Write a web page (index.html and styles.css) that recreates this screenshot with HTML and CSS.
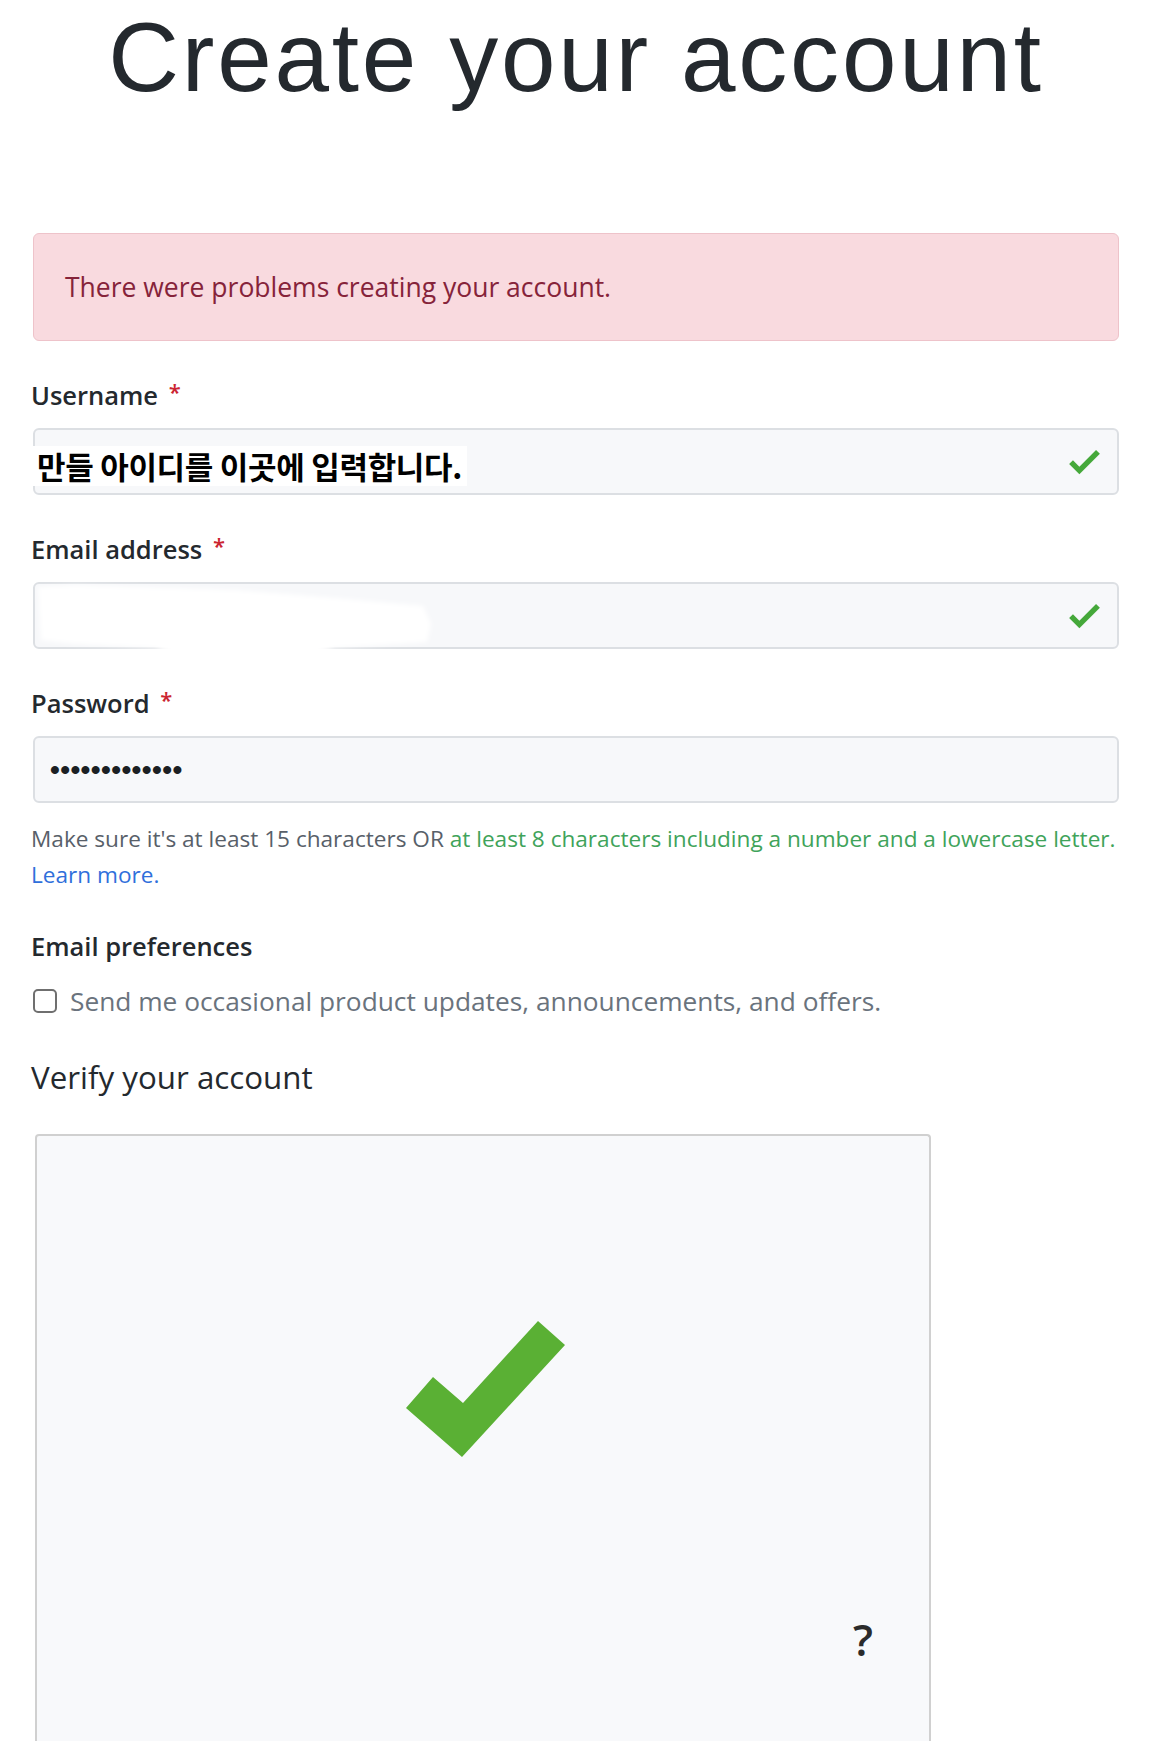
FILE: index.html
```html
<!DOCTYPE html>
<html lang="en">
<head>
<meta charset="utf-8">
<title>Create your account</title>
<link rel="stylesheet" href="styles.css">
</head>
<body>
<div class="page">
  <h1 class="title">Create your account</h1>

  <div class="flash">There were problems creating your account.</div>

  <div class="field">
    <div class="label">Username <span class="req">*</span></div>
    <div class="input">
      <span class="pasted">만들 아이디를 이곳에 입력합니다.</span>
      <svg class="ok" viewBox="0 0 12 16" width="31" height="41"><path d="M12 5l-8 8-4-4 1.5-1.5L4 10l6.5-6.5L12 5z"/></svg>
    </div>
  </div>

  <div class="field">
    <div class="label">Email address <span class="req">*</span></div>
    <div class="input input-email">
      <svg class="smear" width="420" height="80" viewBox="0 0 420 80">
        <defs><filter id="soft" x="-10%" y="-30%" width="120%" height="160%"><feGaussianBlur stdDeviation="2"/></filter></defs>
        <path d="M3 3 L40 1 L200 6 L300 14 L388 22 L396 40 L392 58 L300 64 L268 74 L150 74 L120 64 L40 60 L6 56 Z" fill="#ffffff" filter="url(#soft)"/>
      </svg>
      <svg class="ok" viewBox="0 0 12 16" width="31" height="41"><path d="M12 5l-8 8-4-4 1.5-1.5L4 10l6.5-6.5L12 5z"/></svg>
    </div>
  </div>

  <div class="field">
    <div class="label">Password <span class="req">*</span></div>
    <div class="input">
      <span class="dots">•••••••••••••</span>
    </div>
  </div>

  <p class="note">Make sure it's at least 15 characters OR <span class="green">at least 8 characters including a number and a lowercase letter.</span><br><a class="link" href="#">Learn more.</a></p>

  <div class="label prefs">Email preferences</div>
  <div class="check-row">
    <span class="box"></span>
    <span class="check-text">Send me occasional product updates, announcements, and offers.</span>
  </div>

  <h2 class="verify">Verify your account</h2>

  <div class="captcha">
    <svg class="big-check" width="896" height="607" viewBox="0 0 896 607">
      <polygon points="398,243 428,269 503,187 530,211 427,323 371,274" fill="#5ab034"/>
    </svg>
    <span class="help">?</span>
  </div>
</div>
</body>
</html>
```

FILE: styles.css
```css
html, body {
  margin: 0;
  padding: 0;
  background: #ffffff;
}

body {
  font-family: "Open Sans", "Noto Sans", sans-serif;
  color: #24292e;
}

.page {
  width: 1086px;
  margin: 0 auto;
}

.title {
  margin: 7px 0 0;
  font-family: "Liberation Sans", Arial, sans-serif;
  font-weight: 400;
  font-size: 98px;
  line-height: 100px;
  letter-spacing: 2.8px;
  text-align: center;
  color: #24292e;
}

.flash {
  margin-top: 126px;
  height: 108px;
  box-sizing: border-box;
  display: flex;
  align-items: center;
  padding: 0 31px;
  background: #f9dadf;
  border: 1px solid #eec3ca;
  border-radius: 6px;
  color: #86233a;
  font-size: 26.5px;
}

.field {
  margin-top: 36px;
}

.label {
  margin-left: -2px;
  font-size: 25.5px;
  font-weight: 600;
  line-height: 36px;
  color: #24292e;
}

.field .label {
  margin-bottom: 15px;
}

.req {
  color: #cb2431;
  font-size: 22px;
  line-height: 0;
  vertical-align: 5px;
  margin-left: 4px;
}

.input {
  position: relative;
  height: 67px;
  box-sizing: border-box;
  display: flex;
  align-items: center;
  padding: 0 17px 0 0;
  background: #f7f8fa;
  border: 2px solid #dcdfe3;
  border-radius: 6px;
}

.pasted {
  height: 40px;
  margin-top: 8px;
  margin-left: -2px;
  padding: 0 5px 0 4px;
  display: flex;
  align-items: center;
  background: #ffffff;
  font-family: "Noto Sans CJK KR", sans-serif;
  font-weight: 700;
  font-size: 31px;
  letter-spacing: -0.3px;
  color: #000000;
}

.ok {
  margin-left: auto;
  fill: #45a83a;
  flex: none;
}

.smear {
  position: absolute;
  left: 0;
  top: 0;
  overflow: visible;
}

.dots {
  margin-left: 15px;
  font-family: "Liberation Sans", Arial, sans-serif;
  font-weight: 700;
  font-size: 28px;
  letter-spacing: 0.4px;
  color: #1b1f23;
}

.note {
  margin: 18px 0 0 -2px;
  font-size: 22.6px;
  line-height: 36px;
  color: #586069;
  white-space: nowrap;
}

.green {
  color: #40a35a;
}

.link {
  color: #2f6fdb;
  text-decoration: none;
}

.prefs {
  margin-top: 35px;
}

.check-row {
  margin-top: 19px;
  display: flex;
  align-items: center;
  gap: 13px;
  line-height: 36px;
}

.box {
  width: 24px;
  height: 24px;
  box-sizing: border-box;
  border: 2px solid #6f6f6f;
  border-radius: 5px;
  background: #ffffff;
  flex: none;
}

.check-text {
  font-size: 26.3px;
  color: #6a737d;
}

.verify {
  margin: 38px 0 0 -2px;
  font-size: 31.3px;
  font-weight: 400;
  line-height: 40px;
  color: #24292e;
}

.captcha {
  position: relative;
  margin: 37px 0 0 2px;
  width: 896px;
  height: 607px;
  box-sizing: border-box;
  background: #f8f9fb;
  border: 2px solid #d0d0d0;
  border-bottom: none;
  border-radius: 4px 4px 0 0;
}

.big-check {
  position: absolute;
  left: -2px;
  top: -2px;
}

.help {
  position: absolute;
  left: 816px;
  top: 478px;
  font-size: 44px;
  font-weight: 600;
  line-height: 50px;
  color: #2b2b2b;
}
```
